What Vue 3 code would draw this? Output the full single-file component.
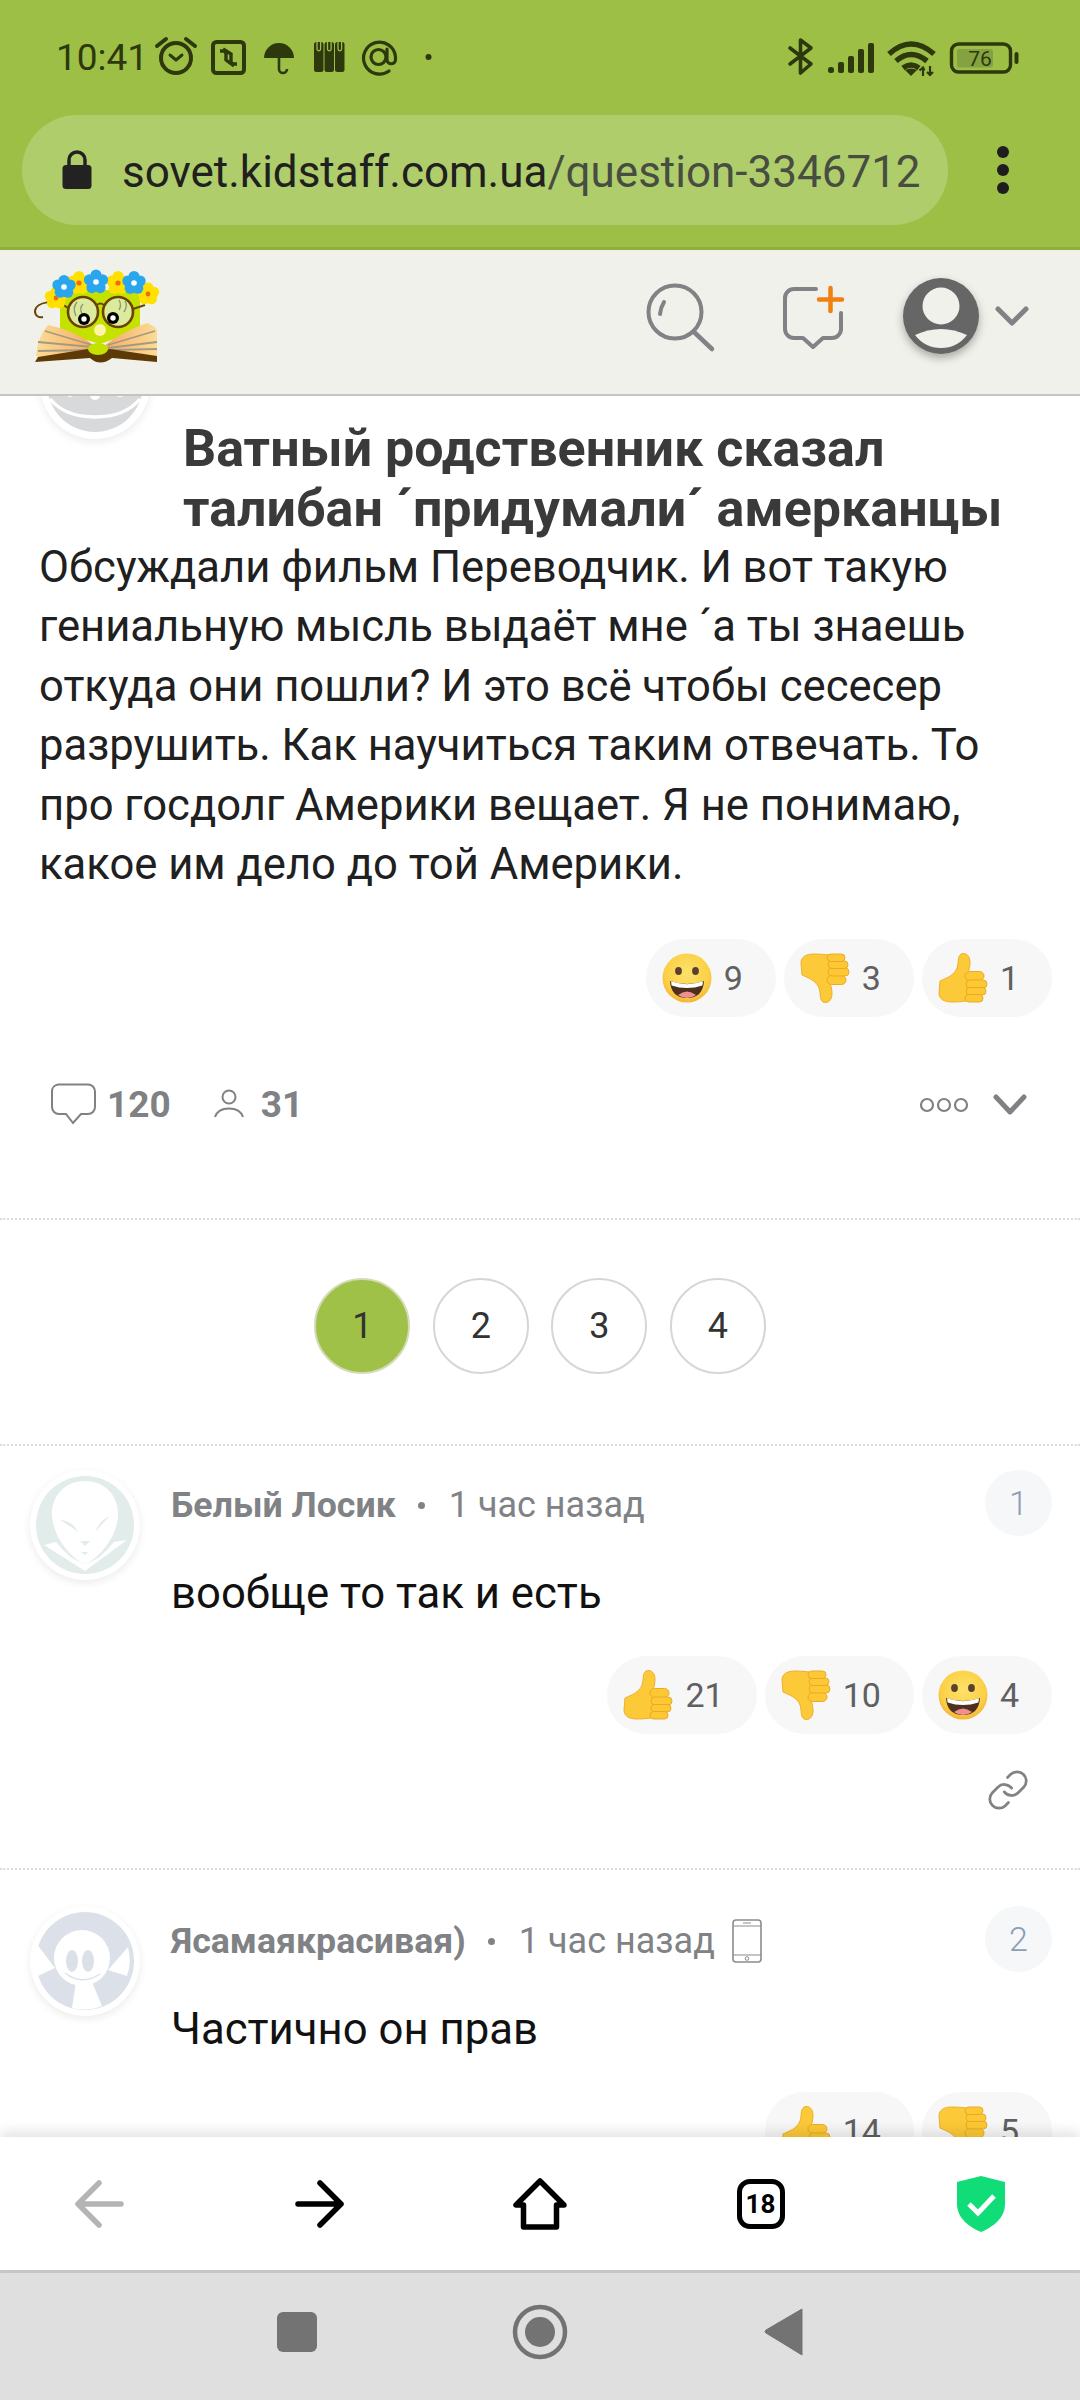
<script setup>
const flowers = [
  { x: 56, y: 298, r: 5.5, d: 6, c: '#ffe000', m: '#f26a10', mr: 2.4 },
  { x: 148, y: 294, r: 5.5, d: 6, c: '#ffe000', m: '#f26a10', mr: 2.4 },
  { x: 79, y: 283, r: 5.5, d: 6.5, c: '#ffe000', m: '#f26a10', mr: 2.6 },
  { x: 118, y: 283, r: 5.5, d: 6.5, c: '#ffe000', m: '#f26a10', mr: 2.6 },
  { x: 64, y: 287, r: 5.5, d: 6.5, c: '#2aa6ee', m: '#ffffff', mr: 2.8 },
  { x: 96, y: 282, r: 5.5, d: 7, c: '#2aa6ee', m: '#ffffff', mr: 2.8 },
  { x: 134, y: 283, r: 5.5, d: 6.5, c: '#2aa6ee', m: '#ffffff', mr: 2.8 }
]
const petals = [0, 72, 144, 216, 288].map((a) => ((a - 90) * Math.PI) / 180)
const qReactions = [
  { icon: 'smile', n: 9 },
  { icon: 'down', n: 3 },
  { icon: 'up', n: 1 }
]
const pages = [1, 2, 3, 4]
const bodyLines = [
  'Обсуждали фильм Переводчик. И вот такую',
  'гениальную мысль выдаёт мне ´а ты знаешь',
  'откуда они пошли? И это всё чтобы сесесер',
  'разрушить. Как научиться таким отвечать. То',
  'про госдолг Америки вещает. Я не понимаю,',
  'какое им дело до той Америки.'
]
const comments = [
  {
    id: 1, cls: 'first', avatar: 'alien', name: 'Белый Лосик', time: '1 час назад', phone: false,
    text: 'вообще то так и есть',
    reactions: [{ icon: 'up', n: 21 }, { icon: 'down', n: 10 }, { icon: 'smile', n: 4 }]
  },
  {
    id: 2, cls: 'second', avatar: 'mouse', name: 'Ясамаякрасивая)', time: '1 час назад', phone: true,
    text: 'Частично он прав',
    reactions: [{ icon: 'up', n: 14 }, { icon: 'down', n: 5 }]
  }
]
</script>

<template>
  <div class="phone">
    <svg class="defs" width="0" height="0" aria-hidden="true">
      <defs>
        <radialGradient id="faceGrad" cx="50%" cy="40%" r="60%">
          <stop offset="0%" stop-color="#fde26a" />
          <stop offset="75%" stop-color="#fbd046" />
          <stop offset="100%" stop-color="#f5b437" />
        </radialGradient>
        <symbol id="smile" viewBox="0 0 50 50">
          <circle cx="25" cy="25" r="24.5" fill="url(#faceGrad)" />
          <ellipse cx="16.5" cy="18" rx="3.4" ry="4" fill="#5b4030" />
          <ellipse cx="33.5" cy="18" rx="3.4" ry="4" fill="#5b4030" />
          <path d="M8 28 Q25 34 42 28 Q41 45 25 45 Q9 45 8 28Z" fill="#4f2f1d" />
          <path d="M9 28.3 Q25 34 41 28.3 L40.4 32.5 Q25 37.5 9.6 32.5Z" fill="#fff" />
          <path d="M16 42 Q25 35 34 42 Q30 45 25 45 Q20 45 16 42Z" fill="#ef8f8f" />
        </symbol>
        <symbol id="up" viewBox="0 0 50 50">
          <path d="M2 28 C8 25 16 23 19 15 C21 10 19 4 23 1 C28 -1 32 3 32 9 C32 14 31 17 30 20 L36 46 Q28 49 14 49 C6 49 1 46 1 40Z" fill="#fcc938" stroke="#eeaf2c" stroke-width="1" />
          <g fill="#fdc833" stroke="#e9ab26" stroke-width="1">
            <rect x="27" y="18.5" width="19" height="9" rx="4.5" />
            <rect x="28" y="27" width="21" height="8" rx="4" />
            <rect x="28" y="34.5" width="20" height="7.5" rx="3.7" />
            <rect x="27" y="41.5" width="18" height="7.5" rx="3.7" />
          </g>
        </symbol>
        <symbol id="down" viewBox="0 0 50 50">
          <g transform="translate(0 50) scale(1 -1)">
            <use href="#up" width="50" height="50" />
          </g>
        </symbol>
      </defs>
    </svg>

    <header class="chrome">
      <div class="status">
        <span class="clock">10:41</span>
        <svg class="st-left" width="290" height="42" viewBox="150 36 290 42">
          <g fill="none" stroke="#2d390d" stroke-width="3.6">
            <circle cx="176" cy="58" r="15" stroke-width="4" />
            <path d="M170 55l6 5 6-5" stroke-linecap="round" stroke-linejoin="round" stroke-width="3" />
            <path d="M157 46l9-7M186 39l9 7" stroke-linecap="round" stroke-width="4" />
            <rect x="213" y="42" width="31" height="31" rx="3.5" stroke-width="4" />
            <path d="M220 51h3c2 0 3 1 3 3v6l8 6M237 64h-3c-2 0-3-1-3-3v-7l-8-5" stroke-width="3.4" />
            <path d="M279 56v13a4 4 0 0 0 8 0" stroke-width="2.6" />
            <circle cx="378.500" cy="57" r="7.500" stroke-width="3.200" />
            <path d="M389 71a16 16 0 1 1 6.500-14v2.500a4.200 4.200 0 0 1-8.500 0V49" stroke-width="3.200" stroke-linecap="round" />
          </g>
          <path d="M264 58a15 15 0 0 1 30 0z" fill="#2d390d" />
          <g fill="#2d390d">
            <rect x="314" y="42" width="9.500" height="30" rx="2.500" />
            <rect x="324.500" y="42" width="9.500" height="30" rx="2.500" />
            <rect x="335" y="42" width="9.500" height="30" rx="2.500" />
          </g>
          <path d="M317 42v7a1.800 1.800 0 0 0 3.600 0v-7M327.500 42v7a1.800 1.800 0 0 0 3.600 0v-7M338 42v7a1.800 1.800 0 0 0 3.600 0v-7" fill="none" stroke="#9ebf46" stroke-width="1.300" />
          <circle cx="428.500" cy="57" r="3" fill="#2d390d" />
        </svg>
        <svg class="st-right" width="240" height="42" viewBox="785 36 240 42">
          <path d="M790 48l21 16-10.500 9V40L811 48l-21 16" fill="none" stroke="#2d390d" stroke-width="3.600" stroke-linejoin="round" stroke-linecap="round" />
          <g fill="#2d390d">
            <rect x="828" y="67" width="6" height="6" rx="2.500" />
            <rect x="838" y="62" width="6" height="11" rx="2" />
            <rect x="848" y="56" width="6" height="17" rx="2" />
            <rect x="858" y="49" width="6" height="24" rx="2" />
            <rect x="868" y="43" width="6" height="30" rx="2" />
          </g>
          <g fill="none" stroke="#2d390d" stroke-width="5.500">
            <path d="M889 54q22-20 45 0" />
            <path d="M896 61q15-13 31 0" />
            <path d="M903 68q8-6 16 0" />
          </g>
          <path d="M905 70q6-3 12 0l-6 6z" fill="#2d390d" />
          <path d="M923 76v-8M919.500 70.500l3.500-3 1.500 3M930 66v9M927 72l3 3 3-3" fill="none" stroke="#2d390d" stroke-width="2.200" />
          <rect x="951.500" y="44" width="59" height="28" rx="7" fill="none" stroke="#2d390d" stroke-width="3.400" />
          <rect x="957" y="49" width="36" height="18.500" rx="2.500" fill="#85a243" />
          <text x="980" y="66" text-anchor="middle" class="batt">76</text>
          <rect x="1014.500" y="52" width="4" height="12" rx="2" fill="#2d390d" />
        </svg>
      </div>
      <div class="url-row">
        <div class="url-pill">
          <svg class="lock" width="30" height="40" viewBox="0 0 30 40">
            <path d="M7 18V10a8 8 0 0 1 16 0v8" fill="none" stroke="#222" stroke-width="3.500" />
            <rect x="0.500" y="15" width="29" height="24" rx="3.500" fill="#222" />
          </svg>
          <span class="url"><span class="domain">sovet.kidstaff.com.ua</span><span class="path">/question-3346712</span></span>
        </div>
        <div class="kebab"><i></i><i></i><i></i></div>
      </div>
    </header>

    <div class="site-head">
      <svg class="logo" width="130" height="108" viewBox="30 262 130 108">
        <defs>
          <linearGradient id="pageL" x1="0" y1="0" x2="1" y2="0">
            <stop offset="0%" stop-color="#fbdc95" />
            <stop offset="70%" stop-color="#f9b870" />
            <stop offset="100%" stop-color="#f29a45" />
          </linearGradient>
          <linearGradient id="pageR" x1="1" y1="0" x2="0" y2="0">
            <stop offset="0%" stop-color="#fbdc95" />
            <stop offset="70%" stop-color="#f9b870" />
            <stop offset="100%" stop-color="#f29a45" />
          </linearGradient>
        </defs>
        <path d="M60 290H140V330L100 344 60 332Z" fill="#c4e100" />
        <path d="M36 356C37 342 42 332 48 325 70 330 88 338 98 350L40 358Z" fill="url(#pageL)" />
        <path d="M157 354V330C154 326 150 324 147 323 128 330 112 338 100 350L157 358Z" fill="url(#pageR)" />
        <g fill="none" stroke="#a39a84" stroke-width="1.800">
          <path d="M45 331 92 345M38 342 92 347M38 351 90 350" />
          <path d="M155 331 108 345M157 342 108 348M157 349 110 350" />
        </g>
        <path d="M35 362L38 357 88 349Q98 352 110 349L157 356V362L112 358Q100 367 90 358Z" fill="#5d3a05" />
        <ellipse cx="98" cy="349" rx="10" ry="6" fill="#c4e100" />
        <circle cx="100" cy="330" r="6" fill="#fdf4a8" />
        <path d="M68 308C55 298 36 302 35 311 35 316 39 318 43 317" fill="none" stroke="#6a4304" stroke-width="2" />
        <g fill="#dcea9d" stroke="#6a4304" stroke-width="2.600">
          <circle cx="83" cy="312" r="15" />
          <circle cx="118" cy="312" r="15" />
        </g>
        <path d="M97 305q3-3 7 0M133 309l12-4" fill="none" stroke="#6a4304" stroke-width="2" />
        <path d="M76 316q-4-8 1-14M82 314q-3-6 1-10M119 310q3-5 0-10M124 312q4-6 1-11" fill="none" stroke="#8d9a70" stroke-width="1.400" />
        <circle cx="84" cy="319" r="6" fill="#000" /><circle cx="84" cy="319" r="2.700" fill="#fff" />
        <circle cx="113" cy="318" r="6" fill="#000" /><circle cx="113" cy="318" r="2.700" fill="#fff" />
        <g v-for="(f, i) in flowers" :key="i">
          <circle v-for="(p, j) in petals" :key="j" :cx="f.x + Math.cos(p) * f.d" :cy="f.y + Math.sin(p) * f.d" :r="f.r" :fill="f.c" />
          <circle :cx="f.x" :cy="f.y" :r="f.mr + 2" :fill="f.c" />
          <circle :cx="f.x" :cy="f.y" :r="f.mr" :fill="f.m" />
        </g>
      </svg>
      <svg class="h-search" width="80" height="108" viewBox="640 262 80 108">
        <g fill="none" stroke="#808285" stroke-linecap="round">
          <circle cx="675" cy="312" r="26.500" stroke-width="4" />
          <path d="M694 332l18 17" stroke-width="4.500" />
          <path d="M660 314q.5-6 4-12" stroke-width="4" />
        </g>
      </svg>
      <svg class="h-add" width="75" height="108" viewBox="775 262 75 108">
        <path d="M816 289H794a9 9 0 0 0-9 9v31a9 9 0 0 0 9 9h9l10 9 10-9h9a9 9 0 0 0 9-9V313" fill="none" stroke="#808285" stroke-width="4" stroke-linecap="round" stroke-linejoin="round" />
        <path d="M819 299.500h23M830.500 288v23" fill="none" stroke="#f08012" stroke-width="4.500" stroke-linecap="round" />
      </svg>
      <svg class="h-user" width="90" height="108" viewBox="897 262 90 108">
        <circle cx="941" cy="316" r="38" fill="#666" />
        <circle cx="941" cy="306" r="18.500" fill="#f0f1ea" />
        <path d="M915 335Q941 323 967 335Q957 348 941 348Q925 348 915 335Z" fill="#f0f1ea" />
      </svg>
      <svg class="h-chev" width="43" height="108" viewBox="990 262 43 108">
        <path d="M998 309l14 14 14-14" fill="none" stroke="#808285" stroke-width="5" stroke-linecap="round" stroke-linejoin="round" />
      </svg>
    </div>

    <main class="content">
      <section class="question">
        <div class="q-head">
          <svg class="q-avatar" width="110" height="110" viewBox="0 0 110 110">
            <circle cx="55" cy="55" r="48" fill="#d7d9db" />
            <path d="M10 70Q25 88 55 88T100 70" fill="none" stroke="#fff" stroke-width="3.500" />
            <circle cx="30" cy="64" r="4" fill="#fff" />
            <circle cx="55" cy="66" r="5" fill="#fff" />
            <circle cx="80" cy="64" r="4" fill="#fff" />
          </svg>
          <h1 class="title">Ватный родственник сказал<br />талибан ´придумали´ амерканцы</h1>
        </div>
        <div class="body-text">
          <div v-for="(l, i) in bodyLines" :key="i">{{ l }}</div>
        </div>
        <div class="reactions q-reactions">
          <div v-for="r in qReactions" :key="r.icon" class="pill">
            <svg class="emoji" width="50" height="50"><use :href="'#' + r.icon" width="50" height="50" /></svg>
            <span>{{ r.n }}</span>
          </div>
        </div>
        <div class="stats">
          <svg class="s-comment" width="46" height="42" viewBox="0 0 46 42">
            <path d="M7 1.500H37a7 7 0 0 1 7 7V24a7 7 0 0 1-7 7H30l-8 9-7-9H8a7 7 0 0 1-7-7V8.500a7 7 0 0 1 6-7Z" fill="none" stroke="#7f8184" stroke-width="2" />
          </svg>
          <b class="s-n">120</b>
          <svg class="s-user" width="30" height="30" viewBox="0 0 30 30">
            <circle cx="15" cy="8" r="6.500" fill="none" stroke="#7f8184" stroke-width="2" />
            <path d="M1 28C3 22 9 19.500 15 19.500S27 22 29 28" fill="none" stroke="#7f8184" stroke-width="2" />
          </svg>
          <b class="s-n">31</b>
          <svg class="s-more" width="110" height="24" viewBox="0 0 110 24">
            <g fill="none" stroke="#7f8184" stroke-width="2.200">
              <circle cx="8" cy="13" r="6" />
              <circle cx="25" cy="13" r="6" />
              <circle cx="42" cy="13" r="6" />
            </g>
            <path d="M77 5l14 15 14-15" fill="none" stroke="#7f8184" stroke-width="5" stroke-linecap="round" stroke-linejoin="round" />
          </svg>
        </div>
      </section>

      <nav class="pager">
        <span v-for="p in pages" :key="p" class="page" :class="{ on: p === 1 }">{{ p }}</span>
      </nav>

      <article v-for="c in comments" :key="c.id" class="comment" :class="c.cls">
        <svg class="c-avatar" width="110" height="110" viewBox="0 0 110 110">
          <template v-if="c.avatar === 'alien'">
            <circle cx="55" cy="55" r="49" fill="#e2ecea" />
            <path d="M55 11C34 11 21 27 22 46C23 66 40 88 55 94C70 88 87 66 88 46C89 27 76 11 55 11Z" fill="#fff" />
            <path d="M14 75L55 101L97 70L84 72Q70 90 55 94Q40 90 26 72Z" fill="#fff" />
            <path d="M30 50Q42 50 48 62Q40 56 30 50ZM80 46Q70 50 65 62Q72 54 80 46ZM50 71h10l-5 5zM51 82h7l-3 3z" fill="#e2ecea" />
          </template>
          <template v-else>
            <circle cx="55" cy="55" r="49" fill="#dce0e9" />
            <circle cx="52" cy="52" r="28" fill="#fff" />
            <path d="M6 37L25 62 8 70Q3 54 6 37ZM98 41L78 64 97 70Q102 56 98 41Z" fill="#fff" />
            <path d="M46 76L42 102Q58 106 72 100L62 76Z" fill="#fff" />
            <ellipse cx="42" cy="55" rx="6" ry="11" fill="#dce0e9" />
            <ellipse cx="58" cy="55" rx="6" ry="11" fill="#dce0e9" />
            <circle cx="50" cy="56" r="1.800" fill="#fff" />
            <path d="M35 67Q52 80 70 68" fill="none" stroke="#dce0e9" stroke-width="1.500" />
          </template>
        </svg>
        <div class="c-main">
          <div class="c-head">
            <div class="meta">
              <b class="who">{{ c.name }}</b>
              <i class="sep"></i>
              <span class="when">{{ c.time }}</span>
              <svg v-if="c.phone" class="c-phone" width="30" height="44" viewBox="0 0 30 44">
                <rect x="1" y="1" width="28" height="42" rx="3" fill="none" stroke="#8a8c8f" stroke-width="1.600" />
                <path d="M1 7h28M1 36h28M11 4h8" fill="none" stroke="#8a8c8f" stroke-width="1.200" />
                <circle cx="15" cy="39.500" r="1.800" fill="none" stroke="#8a8c8f" stroke-width="1" />
              </svg>
            </div>
            <span class="badge">{{ c.id }}</span>
          </div>
          <p class="c-text">{{ c.text }}</p>
          <div class="reactions c-reactions">
            <div v-for="r in c.reactions" :key="r.icon" class="pill">
              <svg class="emoji" width="50" height="50"><use :href="'#' + r.icon" width="50" height="50" /></svg>
              <span>{{ r.n }}</span>
            </div>
          </div>
          <div class="link-row">
            <svg width="44" height="44" viewBox="0 0 24 24">
              <g fill="none" stroke="#808285" stroke-width="1.500" stroke-linecap="round" stroke-linejoin="round">
                <path d="M10 13a5 5 0 0 0 7.540.540l3-3a5 5 0 0 0-7.070-7.070l-1.720 1.710" />
                <path d="M14 11a5 5 0 0 0-7.540-.540l-3 3a5 5 0 0 0 7.070 7.070l1.710-1.710" />
              </g>
            </svg>
          </div>
        </div>
      </article>
    </main>

    <footer class="browser-nav">
      <svg width="60" height="60" viewBox="0 0 60 60">
        <path d="M52 30H9M30 9L9 30l21 21" fill="none" stroke="#b4b4b4" stroke-width="5.500" stroke-linecap="round" stroke-linejoin="round" />
      </svg>
      <svg width="60" height="60" viewBox="0 0 60 60">
        <path d="M8 30H51M30 9l21 21-21 21" fill="none" stroke="#000" stroke-width="5.500" stroke-linecap="round" stroke-linejoin="round" />
      </svg>
      <svg width="60" height="60" viewBox="0 0 60 60">
        <path d="M30 7L6 31h7.500V53H46.500V31H54Z" fill="none" stroke="#000" stroke-width="5.500" stroke-linejoin="round" />
      </svg>
      <div class="tabs">18</div>
      <svg width="60" height="60" viewBox="0 0 60 60">
        <path d="M30 2L54 8V30C54 44 42 53 30 58C18 53 6 44 6 30V8Z" fill="#10dc78" />
        <path d="M18 30l9 9 16-17" fill="none" stroke="#fff" stroke-width="5" />
      </svg>
    </footer>

    <div class="sys-nav">
      <svg width="60" height="60" viewBox="0 0 60 60"><rect x="10" y="10" width="40" height="40" rx="6" fill="#737373" /></svg>
      <svg width="60" height="60" viewBox="0 0 60 60">
        <circle cx="30" cy="30" r="25" fill="none" stroke="#737373" stroke-width="4.500" />
        <circle cx="30" cy="30" r="15" fill="#737373" />
      </svg>
      <svg width="60" height="60" viewBox="0 0 60 60">
        <path d="M48 7V53L12 31Q10 30 12 28Z" fill="#737373" stroke="#737373" stroke-width="1" stroke-linejoin="round" />
      </svg>
    </div>
  </div>
</template>

<style scoped>
.phone {
  width: 1080px;
  height: 2400px;
  display: flex;
  flex-direction: column;
  overflow: hidden;
  background: #fff;
  font-family: Roboto, "Noto Sans", sans-serif;
}
.defs { position: absolute; }
.chrome {
  height: 250px;
  box-sizing: border-box;
  background: #9ebf46;
  border-bottom: 3px solid #8fae3e;
  flex: none;
}
.status {
  height: 115px;
  display: flex;
  align-items: flex-start;
  padding-left: 56px;
}
.clock {
  font-size: 37px;
  line-height: 42px;
  margin-top: 37px;
  color: #2d390d;
  width: 94px;
}
.st-left, .st-right { margin-top: 36px; flex: none; }
.st-right { margin-left: 345px; }
.batt { font-size: 21px; font-family: Roboto, sans-serif; fill: #2d390d; }
.url-row { display: flex; align-items: center; height: 110px; padding-left: 22px; }
.url-pill {
  width: 926px;
  height: 110px;
  border-radius: 55px;
  background: #b0cd6b;
  display: flex;
  align-items: center;
  padding-left: 40px;
  box-sizing: border-box;
}
.url { font-size: 44px; margin-left: 30px; padding-top: 4px; white-space: nowrap; }
.domain { color: #202020; }
.path { color: #474d40; }
.kebab { margin-left: 49px; display: flex; flex-direction: column; gap: 6px; }
.kebab i { width: 12px; height: 12px; border-radius: 50%; background: #1e1e1e; display: block; }
.site-head {
  height: 146px;
  box-sizing: border-box;
  flex: none;
  background: #f0f1ea;
  border-bottom: 2px solid #c4c4c4;
  padding-top: 12px;
  display: flex;
  align-items: flex-start;
}
.site-head svg { flex: none; overflow: visible; }
.logo { margin-left: 30px; margin-right: 480px; }
.h-add { margin-left: 55px; }
.h-user { margin-left: 47px; filter: drop-shadow(0 4px 4px rgba(0, 0, 0, 0.3)); }
.h-chev { margin-left: 3px; }
.content { flex: 1; min-height: 0; overflow: hidden; }
.q-head { display: flex; align-items: flex-start; padding: 23px 40px 0; }
.q-avatar {
  flex: none;
  margin-top: -90px;
  border-radius: 50%;
  box-shadow: 0 3px 8px rgba(0, 0, 0, 0.08);
  background: #fff;
}
.title {
  margin: 0 0 0 33px;
  font-size: 52px;
  line-height: 60px;
  font-weight: 700;
  color: #3a3a3a;
  white-space: nowrap;
}
.body-text {
  padding-left: 39px;
  margin-top: -1px;
  font-size: 43.600px;
  line-height: 59.4px;
  color: #202020;
  white-space: nowrap;
}
.reactions { display: flex; justify-content: flex-end; gap: 8px; }
.q-reactions { margin-top: 45px; padding-right: 28px; }
.pill {
  height: 78px;
  border-radius: 39px;
  background: #f7f7f7;
  display: flex;
  align-items: center;
  padding: 0 33px 0 16px;
  font-size: 34px;
  color: #5f6062;
  box-sizing: border-box;
}
.emoji { margin-right: 12px; flex: none; }
.stats {
  margin-top: 57px;
  height: 60px;
  display: flex;
  align-items: center;
  padding: 0 51px 0 51px;
}
.s-n { font-size: 37px; font-weight: 700; color: #7f8184; }
.s-comment { margin-right: 10px; }
.s-user { margin-left: 43px; margin-right: 17px; }
.s-more { margin-left: auto; }
.pager {
  margin-top: 84px;
  border-top: 2px dotted #dcdcdc;
  border-bottom: 2px dotted #dcdcdc;
  padding: 58px 0 70px;
  display: flex;
  justify-content: center;
  gap: 22.500px;
}
.page {
  width: 96px;
  height: 96px;
  box-sizing: border-box;
  border: 2px solid #d6d6d6;
  border-radius: 50%;
  display: flex;
  align-items: center;
  justify-content: center;
  font-size: 36px;
  color: #333;
}
.page.on { background: #a0c148; border-color: #d2dcb8; }
.comment { display: flex; padding: 0 28px 0 30px; }
.comment.first { padding-top: 24px; border-bottom: 2px dotted #dcdcdc; }
.comment.second { padding-top: 36px; }
.c-avatar {
  flex: none;
  border-radius: 50%;
  background: #fff;
  box-shadow: 0 3px 8px rgba(0, 0, 0, 0.08);
}
.c-main { flex: 1; margin-left: 31px; min-width: 0; }
.c-head { display: flex; align-items: flex-start; height: 66px; }
.meta {
  display: flex;
  align-items: center;
  height: 40px;
  margin-top: 15px;
  font-size: 35.700px;
  color: #808285;
  white-space: nowrap;
}
.who { font-weight: 700; }
.when { font-size: 36px; }
.sep { width: 7px; height: 7px; border-radius: 50%; background: #808285; margin: 0 24px 0 22px; display: block; }
.c-phone { margin-left: 17px; }
.badge {
  margin-left: auto;
  width: 67px;
  height: 66px;
  border-radius: 50%;
  background: #f6f7f9;
  color: #8d9db5;
  font-size: 34px;
  font-weight: 300;
  display: flex;
  align-items: center;
  justify-content: center;
}
.c-text { margin: 27px 0 0; font-size: 43.700px; line-height: 60px; color: #111; }
.c-reactions { margin-top: 33px; }
.link-row { display: flex; justify-content: flex-end; margin-top: 34px; padding-right: 22px; padding-bottom: 56px; }
.browser-nav {
  position: relative;
  height: 133px;
  flex: none;
  background: #fff;
  box-shadow: 0 -6px 12px rgba(0, 0, 0, 0.1);
  display: flex;
  align-items: center;
  justify-content: space-between;
  padding: 0 69px;
  box-sizing: border-box;
}
.tabs {
  width: 60px;
  height: 60px;
  display: flex;
  align-items: center;
  justify-content: center;
  font-size: 26px;
  font-weight: 700;
  color: #000;
  position: relative;
}
.tabs::before {
  content: "";
  position: absolute;
  left: 6px;
  top: 5px;
  width: 48px;
  height: 50px;
  box-sizing: border-box;
  border: 5px solid #000;
  border-radius: 13px;
}
.sys-nav {
  flex: none;
  height: 130px;
  box-sizing: border-box;
  border-top: 3px solid #c8c8c8;
  background: #dfdfdf;
  display: flex;
  align-items: center;
  justify-content: center;
  gap: 183.500px;
  padding-bottom: 9px;
}
</style>
